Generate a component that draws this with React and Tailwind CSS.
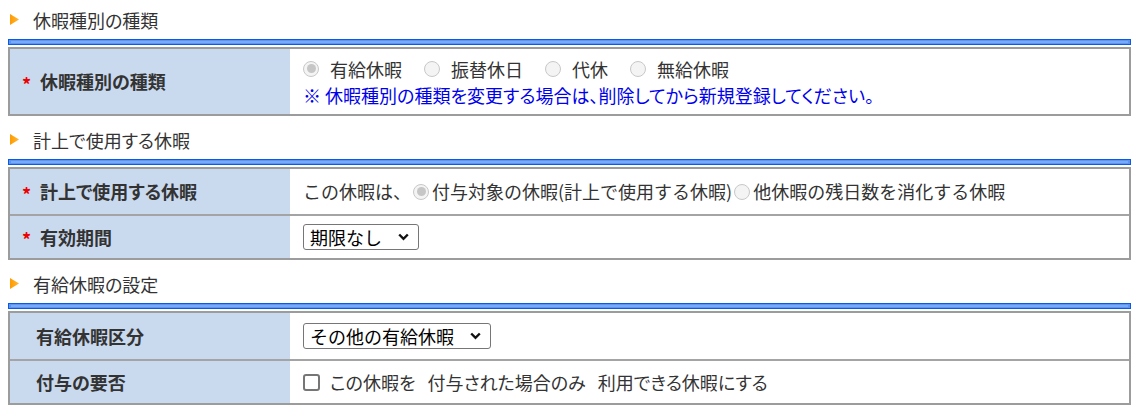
import React from 'react';

const font = { fontFamily: '"Noto Sans CJK JP", "Noto Sans", sans-serif' };

const SectionHeader = ({ title, first }) => (
  <div className={`flex items-center h-[39px] pl-[2px] ${first ? '' : 'mt-[4px]'}`}>
    <svg width="10" height="11" viewBox="0 0 10 11" className="shrink-0">
      <defs>
        <linearGradient id="arr" x1="0" y1="0" x2="1" y2="0">
          <stop offset="0" stopColor="#ff9a00" />
          <stop offset="1" stopColor="#ffb733" />
        </linearGradient>
      </defs>
      <polygon points="0,0 9,5.5 0,11" fill="url(#arr)" />
    </svg>
    <span className="ml-[13px] text-[18px] text-[#333] leading-none">{title}</span>
  </div>
);

const BlueBar = () => (
  <div className="h-[6px] border border-[#0a5ae4] bg-[#5c96f2] mb-[2px] flex items-center px-[2px]">
    <div className="h-[2px] w-full bg-[#7aaaf6]" />
  </div>
);

const Label = ({ children, required }) => (
  <div className="w-[280px] shrink-0 bg-[#c9d9ee] flex items-center pl-[12px]">
    {required ? (
      <span className="w-[18px] text-[#ee0000] font-bold text-[18px] leading-none pt-[4px]">*</span>
    ) : (
      <span className="w-[14px]" />
    )}
    <span className="text-[18px] font-bold text-[#333]">{children}</span>
  </div>
);

const Radio = ({ checked, className = '' }) => (
  <span
    className={`inline-flex items-center justify-center w-[16px] h-[16px] rounded-full border border-[#c8c8c8] bg-[#f4f4f4] shrink-0 ${className}`}
  >
    {checked && <span className="w-[9px] h-[9px] rounded-full bg-[#c6c6c6]" />}
  </span>
);

const Select = ({ children }) => (
  <div className="inline-flex items-center h-[26px] border border-[#767676] rounded-[3px] pl-[6px] pr-[9px] text-[18px] text-black bg-white [font-feature-settings:normal]">
    <span className="leading-none">{children}</span>
    <svg width="11" height="8" viewBox="0 0 11 8" className="ml-[16px]">
      <path d="M1.2 1.5 L5.5 5.8 L9.8 1.5" fill="none" stroke="#111" strokeWidth="2.4" />
    </svg>
  </div>
);

const Row = ({ label, required, height, first, children }) => (
  <div className={`flex ${first ? '' : 'border-t-2 border-[#a4a4a4]'}`} style={{ height }}>
    <Label required={required}>{label}</Label>
    <div className="flex-1 bg-white flex flex-col justify-center pl-[13px] text-[18px] text-[#333]">
      {children}
    </div>
  </div>
);

export default function App() {
  return (
    <div className="w-[1143px] h-[418px] bg-white pl-[8px] pr-[12px] [font-feature-settings:'palt']" style={font}>
      <SectionHeader title="休暇種別の種類" first />
      <BlueBar />
      <div className="border-2 border-[#9c9c9c]">
        <Row label="休暇種別の種類" required height={65} first>
          <div className="flex items-center leading-[26px]">
            <Radio checked />
            <span className="ml-[11px]">有給休暇</span>
            <Radio className="ml-[22px]" />
            <span className="ml-[11px]">振替休日</span>
            <Radio className="ml-[22px]" />
            <span className="ml-[11px]">代休</span>
            <Radio className="ml-[22px]" />
            <span className="ml-[11px]">無給休暇</span>
          </div>
          <div className="leading-[26px] text-[#0000ee]">
            ※ 休暇種別の種類を変更する場合は、削除してから新規登録してください。
          </div>
        </Row>
      </div>

      <SectionHeader title="計上で使用する休暇" />
      <BlueBar />
      <div className="border-2 border-[#9c9c9c]">
        <Row label="計上で使用する休暇" required height={45} first>
          <div className="flex items-center [font-feature-settings:normal]">
            <span>この休暇は、</span>
            <Radio checked className="ml-[2px]" />
            <span className="ml-[3px]">付与対象の休暇(計上で使用する休暇)</span>
            <Radio className="ml-[2px]" />
            <span className="ml-[3px]">他休暇の残日数を消化する休暇</span>
          </div>
        </Row>
        <Row label="有効期間" required height={44}>
          <div>
            <Select>期限なし</Select>
          </div>
        </Row>
      </div>

      <SectionHeader title="有給休暇の設定" />
      <BlueBar />
      <div className="border-2 border-[#9c9c9c]">
        <Row label="有給休暇区分" height={46} first>
          <div>
            <Select>その他の有給休暇</Select>
          </div>
        </Row>
        <Row label="付与の要否" height={44}>
          <div className="flex items-center">
            <span className="w-[17px] h-[17px] rounded-[3px] border-2 border-[#767676] bg-white shrink-0" />
            <span className="ml-[10px]">この休暇を</span>
            <span className="ml-[12px]">付与された場合のみ</span>
            <span className="ml-[12px]">利用できる休暇にする</span>
          </div>
        </Row>
      </div>
    </div>
  );
}
